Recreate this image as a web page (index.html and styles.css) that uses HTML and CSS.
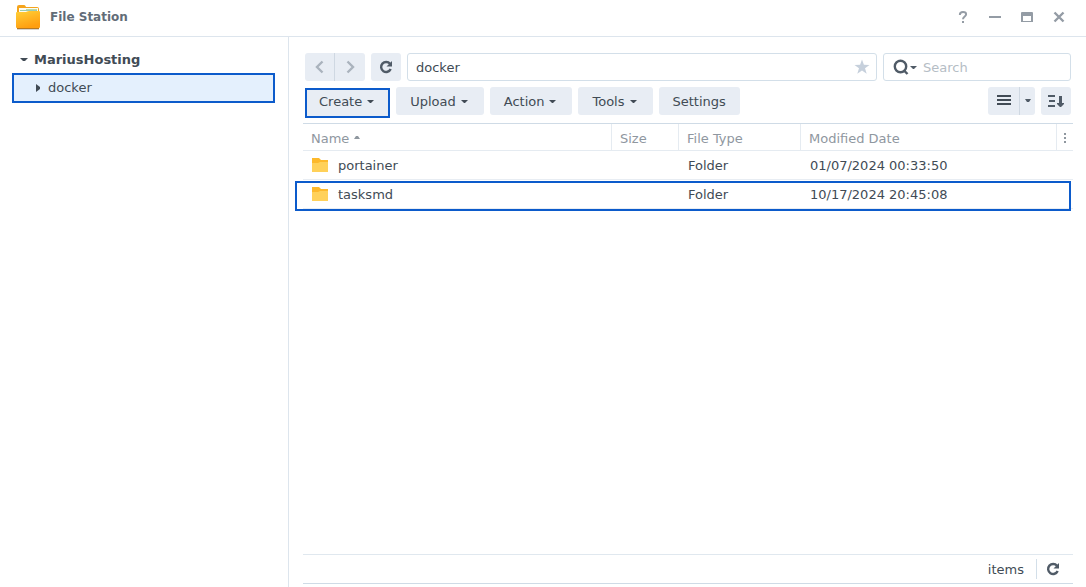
FILE: index.html
```
<!DOCTYPE html>
<html lang="en">
<head>
<meta charset="utf-8">
<title>File Station</title>
<link rel="stylesheet" href="styles.css">
</head>
<body>
<header class="titlebar">
  <svg class="app-icon" width="24" height="26" viewBox="0 0 24 26" aria-hidden="true">
    <defs><linearGradient id="front" x1="0" y1="0" x2="0.4" y2="1"><stop offset="0" stop-color="#ffd038"/><stop offset="1" stop-color="#ff9f10"/></linearGradient></defs>
    <path d="M1 3q0-2 2-2h5q1 0 1.500 1l.5 1h11q2 0 2 2v8H1z" fill="#f5a41c"/>
    <path d="M3 4h19v6H3z" fill="#fbfdf5"/>
    <path d="M10 5h11v1H10z" fill="#b9d9a8"/>
    <path d="M4 6h17v1H4z" fill="#9ccbb0"/>
    <path d="M0 9q0-1 1-1h8q1 0 2-.5t2-.5h10q1 0 1 1V23q0 1-1 1H1q-1 0-1-1z" fill="url(#front)"/>
    <path d="M1 24h22v1H1z" fill="#b87820"/><path d="M1 25h22v1H1z" fill="#d8d5d0"/>
  </svg>
  <h1 class="title">File Station</h1>
  <div class="window-controls">
    <button class="window-button" aria-label="Help"><svg width="14" height="14" viewBox="0 0 14 14"><path d="M3.900 5V4.500q0-2.500 3.100-2.500t3.100 2.200c0 2.200-3.100 2.300-3.100 5" fill="none" stroke="currentColor" stroke-width="2"/><path d="M6 11h2v2H6z" fill="currentColor"/></svg></button>
    <button class="window-button" aria-label="Minimize"><svg width="14" height="14" viewBox="0 0 14 14"><path d="M1 6h12v2H1z" fill="currentColor"/></svg></button>
    <button class="window-button" aria-label="Maximize"><svg width="14" height="14" viewBox="0 0 14 14"><path d="M2 2h10q1 0 1 1v9H1V3q0-1 1-1zM3 6v5h8V6z" fill="currentColor" fill-rule="evenodd"/></svg></button>
    <button class="window-button" aria-label="Close"><svg width="14" height="14" viewBox="0 0 14 14"><path d="M2.500 2.500l9 9M11.500 2.500l-9 9" stroke="currentColor" stroke-width="2.400"/></svg></button>
  </div>
</header>
<div class="workspace">
  <nav class="sidebar" aria-label="Folders">
    <button class="tree-root"><svg width="8" height="8" viewBox="0 0 8 8" aria-hidden="true"><path d="M0 2h8L5 5H3z" fill="currentColor"/></svg>MariusHosting</button>
    <button class="tree-item"><svg width="6" height="8" viewBox="0 0 6 8" aria-hidden="true"><path d="M1 0v8l4-3V3z" fill="currentColor"/></svg>docker</button>
  </nav>
  <main class="content">
    <div class="toolbar location-bar">
      <div class="button-group">
        <button class="button icon-button nav-button" aria-label="Back"><svg width="14" height="14" viewBox="0 0 14 14"><path d="M9.500 1.500L4 7l5.500 5.500" fill="none" stroke="currentColor" stroke-width="2.400"/></svg></button>
        <button class="button icon-button nav-button" aria-label="Forward"><svg width="14" height="14" viewBox="0 0 14 14"><path d="M4.500 1.500L10 7l-5.500 5.500" fill="none" stroke="currentColor" stroke-width="2.400"/></svg></button>
      </div>
      <button class="button icon-button" aria-label="Refresh"><svg width="14" height="14" viewBox="0 0 14 14"><path d="M11 3.800A5 5 0 1 0 11.700 9" fill="none" stroke="currentColor" stroke-width="2.400"/><path d="M13 1v5.500H7.500z" fill="currentColor"/></svg></button>
      <div class="field path-field">
        <input class="field-input" type="text" value="docker" aria-label="Path">
        <button class="star" aria-label="Favorite"><svg width="16" height="16" viewBox="0 0 16 16"><path d="M8 .5l1.900 5.300 5.600.1-4.500 3.400 1.700 5.500L8 11.600l-4.700 3.200L5 9.300.5 5.900l5.600-.1z" fill="currentColor"/></svg></button>
      </div>
      <div class="field search-field">
        <button class="search-menu" aria-label="Search options"><svg width="24" height="16" viewBox="0 0 24 16"><circle cx="7.500" cy="7.500" r="5.700" fill="none" stroke="currentColor" stroke-width="2.400"/><path d="M10.500 11l4 4" stroke="currentColor" stroke-width="2.400"/><path d="M17 7h7l-3 3h-1z" fill="currentColor"/></svg></button>
        <input class="field-input" type="text" placeholder="Search" aria-label="Search">
      </div>
    </div>
    <div class="toolbar action-bar">
      <button class="button create-button">Create<svg class="caret" width="7" height="4" viewBox="0 0 7 4"><path d="M0 0h7L4 3H3z" fill="currentColor"/></svg></button>
      <button class="button menu-button">Upload<svg class="caret" width="7" height="4" viewBox="0 0 7 4"><path d="M0 0h7L4 3H3z" fill="currentColor"/></svg></button>
      <button class="button menu-button">Action<svg class="caret" width="7" height="4" viewBox="0 0 7 4"><path d="M0 0h7L4 3H3z" fill="currentColor"/></svg></button>
      <button class="button menu-button">Tools<svg class="caret" width="7" height="4" viewBox="0 0 7 4"><path d="M0 0h7L4 3H3z" fill="currentColor"/></svg></button>
      <button class="button">Settings</button>
      <div class="button-group view-group">
        <button class="button view-button" aria-label="List view"><svg width="16" height="12" viewBox="0 0 16 12"><path d="M1 0h14v2H1zM1 4h14v2H1zM1 8h14v2H1z" fill="currentColor"/></svg></button>
        <button class="button view-caret" aria-label="View options"><svg width="6" height="4" viewBox="0 0 6 4"><path d="M0 0h6L4 3H2z" fill="currentColor"/></svg></button>
      </div>
      <button class="button icon-button" aria-label="Sort"><svg width="16" height="14" viewBox="0 0 16 14"><path d="M0 1h7v2H0zM1 6h6v2H1zM0 11h7v2H0zM11 2h3v7h2v1l-3 3h-1l-3-3V9h2z" fill="currentColor"/></svg></button>
    </div>
    <div class="listing">
      <table class="files">
        <colgroup><col class="col-name"><col class="col-size"><col class="col-type"><col class="col-date"><col class="col-menu"></colgroup>
        <thead>
          <tr>
            <th scope="col">Name<svg class="sort-caret" width="6" height="3" viewBox="0 0 6 3"><path d="M0 3h6L4 0H2z" fill="currentColor"/></svg></th>
            <th scope="col">Size</th>
            <th scope="col">File Type</th>
            <th scope="col">Modified Date</th>
            <th scope="col" class="menu-cell"><button class="column-menu" aria-label="Columns"><svg width="2" height="10" viewBox="0 0 2 10"><path d="M0 0h2v2H0zM0 4h2v2H0zM0 8h2v2H0z" fill="currentColor"/></svg></button></th>
          </tr>
        </thead>
        <tbody>
          <tr>
            <td><svg class="folder" width="16" height="14" viewBox="0 0 16 14"><path d="M0 0h7l2 2h7v10H0z" fill="#fdb92c"/><path d="M0 5h6l2-1h8v10H0z" fill="#ffd15a"/></svg>portainer</td>
            <td></td><td>Folder</td><td>01/07/2024 00:33:50</td><td></td>
          </tr>
          <tr class="marked">
            <td><svg class="folder" width="16" height="14" viewBox="0 0 16 14"><path d="M0 0h7l2 2h7v10H0z" fill="#fdb92c"/><path d="M0 5h6l2-1h8v10H0z" fill="#ffd15a"/></svg>tasksmd</td>
            <td></td><td>Folder</td><td>10/17/2024 20:45:08</td><td></td>
          </tr>
        </tbody>
      </table>
    </div>
    <footer class="statusbar">
      <span class="count">items</span>
      <button class="status-refresh" aria-label="Reload list"><svg width="14" height="14" viewBox="0 0 14 14"><path d="M11 3.800A5 5 0 1 0 11.700 9" fill="none" stroke="currentColor" stroke-width="2.400"/><path d="M13 1v5.500H7.500z" fill="currentColor"/></svg></button>
    </footer>
  </main>
</div>
</body>
</html>
```
FILE: styles.css
```
* { box-sizing: border-box; }
body {
  margin: 0;
  min-height: 100vh;
  display: flex;
  flex-direction: column;
  background: #fff;
  color: #414b55;
  font: 13px/18px "DejaVu Sans", Verdana, sans-serif;
}
button, input { font: inherit; color: inherit; }
button { margin: 0; padding: 0; border: 0; background: none; }
svg { flex: none; }

.titlebar {
  display: flex;
  align-items: center;
  height: 37px;
  padding: 0 20px 2px 16px;
  border-bottom: 1px solid #dde5ed;
}
.app-icon { margin-right: 10px; }
.title {
  margin: 0;
  color: #626c77;
  font-size: 12px;
  line-height: 18px;
}
.window-controls { display: flex; gap: 18px; margin-left: auto; }
.window-button { display: flex; color: #949ca5; }

.workspace { flex: 1; display: flex; }
.sidebar {
  width: 289px;
  flex: none;
  padding: 13px 13px 0 12px;
  border-right: 1px solid #dde5ed;
}
.tree-root, .tree-item { display: flex; align-items: center; width: 100%; }
.tree-root { gap: 6px; height: 20px; margin-bottom: 3px; padding-left: 8px; font-weight: bold; }
.tree-item {
  gap: 7px;
  height: 30px;
  padding: 0 0 0 21px;
  border: 2px solid #0c5bcb;
  background: #e4f0fd;
}

.content {
  flex: 1;
  min-width: 0;
  display: flex;
  flex-direction: column;
  padding: 16px 15px 3px 16px;
}
.toolbar { display: flex; gap: 6px; margin-bottom: 6px; }
.button {
  display: flex;
  align-items: center;
  justify-content: center;
  height: 28px;
  padding: 2px 14px 0;
  border-radius: 3px;
  background: #e8edf4;
}
.menu-button { padding-right: 16px; }
.icon-button { width: 30px; padding: 0; color: #505b67; }
.nav-button { color: #aab3bd; }
.button-group { display: flex; }
.button-group .button:first-child { border-radius: 3px 0 0 3px; border-right: 1px solid #cfd8e2; }
.button-group .button:last-child { border-radius: 0 3px 3px 0; }
.caret { margin-left: 5px; }
.field {
  display: flex;
  align-items: center;
  height: 28px;
  border: 1px solid #d3dfe9;
  border-radius: 3px;
}
.path-field { flex: 1; padding: 0 6px 0 8px; }
.search-field { width: 188px; padding: 0 8px 0 9px; }
.field-input { flex: 1; min-width: 0; padding: 2px 0 0; border: 0; outline: 0; background: none; }
.field-input::placeholder { color: #b5bdc5; opacity: 1; }
.star { display: flex; color: #c6d0dc; }
.search-menu { display: flex; margin-right: 6px; color: #505b67; }
.action-bar { margin-bottom: 8px; }
.create-button {
  height: 30px;
  margin: 1px 0 -3px;
  padding: 0 14px 2px 12px;
  border: 2px solid #0c5bcb;
  border-radius: 0;
}
.view-group { margin-left: auto; }
.view-button { width: 32px; padding: 0; color: #414b55; }
.view-caret { width: 15px; padding: 0; color: #505b67; }

.listing { flex: 1; margin: 0 -2px; border-top: 1px solid #cfdbe6; }
.files { width: 100%; table-layout: fixed; border-collapse: separate; border-spacing: 0; }
.col-size { width: 67px; }
.col-type { width: 122px; }
.col-date { width: 256px; }
.col-menu { width: 16px; }
.files th {
  height: 27px;
  padding: 4px 8px 0;
  border-right: 1px solid #e5ebf1;
  border-bottom: 1px solid #e5ebf1;
  color: #8f979f;
  font-weight: normal;
  text-align: left;
}
.files .menu-cell { padding: 2px 0 0; border-right: 0; }
.sort-caret { margin-left: 5px; vertical-align: 4px; }
.column-menu { display: flex; width: 100%; justify-content: center; color: #8f979f; }
.files td { height: 29px; padding: 2px 9px 0; border-bottom: 1px solid #e8edf3; }
.folder { margin-right: 10px; vertical-align: -2px; }
.marked { position: relative; }
.marked td:last-child::after {
  content: "";
  position: absolute;
  inset: 1px 2px -2px -8px;
  border: 2px solid #0c5bcb;
  pointer-events: none;
}

.statusbar {
  display: flex;
  align-items: center;
  justify-content: flex-end;
  height: 30px;
  margin: 0 -2px;
  padding-right: 13px;
  border-top: 1px solid #e0e8ef;
  border-bottom: 1px solid #cfdbe6;
}
.count { padding: 2px 12px 0 0; border-right: 1px solid #d3dfe9; }
.status-refresh { display: flex; margin-left: 9px; color: #505b67; }
```
